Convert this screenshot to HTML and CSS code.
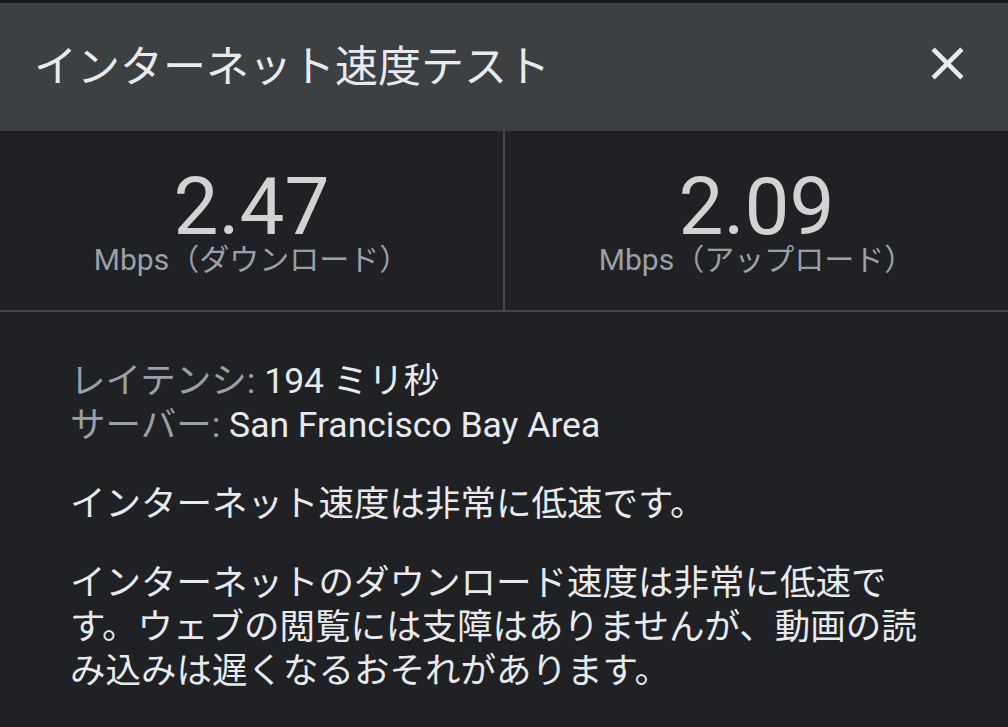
FILE: index.html
```html
<!DOCTYPE html>
<html lang="ja">
<head>
<meta charset="utf-8">
<title>インターネット速度テスト</title>
<link rel="stylesheet" href="styles.css">
</head>
<body>
<div class="topstrip"></div>
<header class="header">
  <h1 class="title">インターネット速度テスト</h1>
  <button class="close" aria-label="閉じる">
    <svg viewBox="0 0 24 24" width="55" height="55"><path fill="#e8eaed" d="M19 6.41L17.59 5 12 10.59 6.41 5 5 6.41 10.59 12 5 17.59 6.41 19 12 13.41 17.59 19 19 17.59 13.41 12z"/></svg>
  </button>
</header>
<section class="stats">
  <div class="stat stat-left">
    <div class="value">2.47</div>
    <div class="unit">Mbps（ダウンロード）</div>
  </div>
  <div class="stat">
    <div class="value">2.09</div>
    <div class="unit">Mbps（アップロード）</div>
  </div>
</section>
<section class="details">
  <div class="info">
    <div class="line"><span class="label">レイテンシ: </span>194 ミリ秒</div>
    <div class="line"><span class="label">サーバー: </span>San Francisco Bay Area</div>
  </div>
  <p class="para">インターネット速度は非常に低速です。</p>
  <p class="para">インターネットのダウンロード速度は非常に低速です。ウェブの閲覧には支障はありませんが、動画の読み込みは遅くなるおそれがあります。</p>
</section>
</body>
</html>
```
FILE: styles.css
```css
* { box-sizing: border-box; }
html, body {
  margin: 0;
  padding: 0;
  background: #202124;
  font-family: Roboto, "Noto Sans CJK JP", sans-serif;
  color: #e8eaed;
  width: 1008px;
  height: 727px;
  overflow: hidden;
}
.topstrip {
  height: 3px;
  background: #17181a;
}
.header {
  height: 128px;
  background: #3c4043;
  display: flex;
  align-items: center;
  justify-content: space-between;
  padding: 0 33px 8px 34px;
}
.title {
  margin: 0;
  font-family: "Noto Sans CJK JP", sans-serif;
  font-weight: 400;
  font-size: 43px;
  color: #e8eaed;
}
.close {
  background: none;
  border: 0;
  padding: 0;
  display: flex;
  cursor: pointer;
}
.stats {
  display: flex;
  height: 181px;
  border-bottom: 2px solid #45474a;
}
.stat {
  flex: 1;
  display: flex;
  flex-direction: column;
  align-items: center;
  padding-top: 40px;
}
.stat-left {
  border-right: 2px solid #45474a;
}
.value {
  font-size: 80px;
  line-height: 72px;
  color: #d2d2d2;
}
.unit {
  font-size: 30px;
  line-height: 34px;
  color: #9aa0a6;
}
.details {
  padding: 47px 70px 0 70px;
  font-size: 35.5px;
  line-height: 44px;
}
.line { white-space: nowrap; }
.label { color: #9aa0a6; }
.para {
  margin: 35px 0 0 0;
}
```
